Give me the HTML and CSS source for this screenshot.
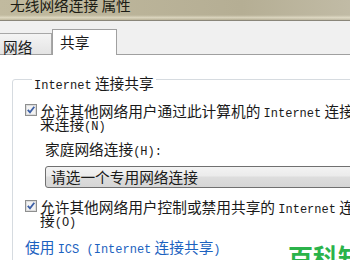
FILE: index.html
```html
<!DOCTYPE html>
<html lang="zh-CN">
<head>
  <meta charset="UTF-8">
  <title>无线网络连接 属性</title>
  <link rel="stylesheet" href="styles.css">
</head>
<body>

  <div class="window">
    <div class="titlebar">
      <div class="title">无线网络连接 属性</div>
    </div>

    <div class="tabs">
      <div class="tab">网络</div>
      <div class="tab active">共享</div>
    </div>

    <div class="panel">
      <fieldset class="group">
        <legend><span class="lat">Internet</span> 连接共享</legend>

        <div class="check-row">
          <span class="checkbox">
            <svg width="12" height="12" viewBox="0 0 12 12">
              <rect x=".5" y=".5" width="11" height="11" fill="#f3f3f3" stroke="#8e8f8f"/>
              <rect x="1.5" y="1.5" width="9" height="9" fill="none" stroke="#dcdcdc"/>
              <path d="M2.8 5.8l2.2 2.6L9.3 2.8" fill="none" stroke="#3c5fa6" stroke-width="1.8"/>
            </svg>
          </span>
          <span class="check-text">允许其他网络用户通过此计算机的 <span class="lat">Internet</span> 连接<br>来连接<span class="lat">(N)</span></span>
        </div>

        <div class="sub-label">家庭网络连接<span class="lat">(H):</span></div>
        <div class="select">请选一个专用网络连接</div>

        <div class="check-row second">
          <span class="checkbox">
            <svg width="12" height="12" viewBox="0 0 12 12">
              <rect x=".5" y=".5" width="11" height="11" fill="#f3f3f3" stroke="#8e8f8f"/>
              <rect x="1.5" y="1.5" width="9" height="9" fill="none" stroke="#dcdcdc"/>
              <path d="M2.8 5.8l2.2 2.6L9.3 2.8" fill="none" stroke="#3c5fa6" stroke-width="1.8"/>
            </svg>
          </span>
          <span class="check-text">允许其他网络用户控制或禁用共享的 <span class="lat">Internet</span> 连<br>接<span class="lat">(O)</span></span>
        </div>

        <a class="ics-link" href="#">使用 <span class="lat">ICS (Internet</span> 连接共享<span class="lat">)</span></a>
      </fieldset>
    </div>
  </div>

  <!-- watermark -->
  <div class="watermark">百科知道</div>

</body>
</html>
```

FILE: styles.css
```css
body {
  margin: 0;
  width: 350px;
  height: 260px;
  overflow: hidden;
  position: relative;
  background: #fff;
  font-family: "Noto Sans CJK SC", sans-serif;
  font-size: 14.7px;
  color: #1a1a1a;
}

.lat {
  font-family: "Liberation Mono", monospace;
  font-size: 12px;
  line-height: 0;
}

.window {
  width: 440px;
}

.titlebar {
  height: 20px;
  overflow: hidden;
  border-bottom: 1px solid #8a867a;
  background:
    linear-gradient(to bottom, rgba(255,255,255,0) 75%, rgba(245,240,220,0.55) 88%, rgba(255,255,255,0) 100%),
    linear-gradient(to right, #c1ba9f, #b5ae94 55%, #cbc6b4);
}

.title {
  margin: -3px 0 0 10px;
  line-height: 16px;
  color: #1c1c14;
}

.tabs {
  display: flex;
  align-items: flex-end;
  height: 33px;
  background: #f0f0f0;
  border-bottom: 1px solid #a0a0a0;
}

.tab {
  box-sizing: border-box;
  height: 21px;
  margin-left: -10px;
  width: 62px;
  padding: 6px 0 0 12px;
  line-height: 14px;
  border: 1px solid #a7a7a7;
  border-bottom: none;
  background: linear-gradient(#f4f4f4, #e4e4e4);
}

.tab.active {
  height: 26px;
  width: 65px;
  margin-left: 0;
  margin-bottom: -1px;
  padding: 5px 0 0 7px;
  background: #fff;
  border-color: #a0a0a0;
}

.panel {
  background: #fff;
}

.group {
  margin: 12px 0 0 12px;
  padding: 13px 0 0 12px;
  height: 230px;
  border: 1px solid #d6dbe0;
  border-radius: 3px;
}

.group legend {
  margin-left: 7px;
  padding: 8px 2px 0;
  line-height: 16px;
}

.check-row {
  display: flex;
  align-items: flex-start;
  gap: 3px;
  line-height: 13px;
  white-space: nowrap;
}

.check-row.second {
  margin-top: 12px;
}

.checkbox {
  flex: none;
  width: 12px;
  height: 12px;
}

.checkbox svg {
  display: block;
}

.sub-label {
  margin: 12px 0 0 20px;
  line-height: 13px;
}

.select {
  box-sizing: border-box;
  width: 400px;
  height: 22px;
  margin: 11px 0 0 20px;
  padding-left: 5px;
  line-height: 20px;
  border: 1px solid #707070;
  border-radius: 3px;
  background: linear-gradient(#f3f3f3 0%, #ebebeb 45%, #dddddd 50%, #d6d6d6 100%);
}

.ics-link {
  display: block;
  margin-top: 14px;
  line-height: 13px;
  color: #1c62c0;
  text-decoration: none;
  white-space: nowrap;
}

.watermark {
  position: absolute;
  left: 288px;
  top: 244px;
  font-size: 25px;
  font-weight: bold;
  line-height: 1;
  color: #2bb34a;
  white-space: nowrap;
}
```
